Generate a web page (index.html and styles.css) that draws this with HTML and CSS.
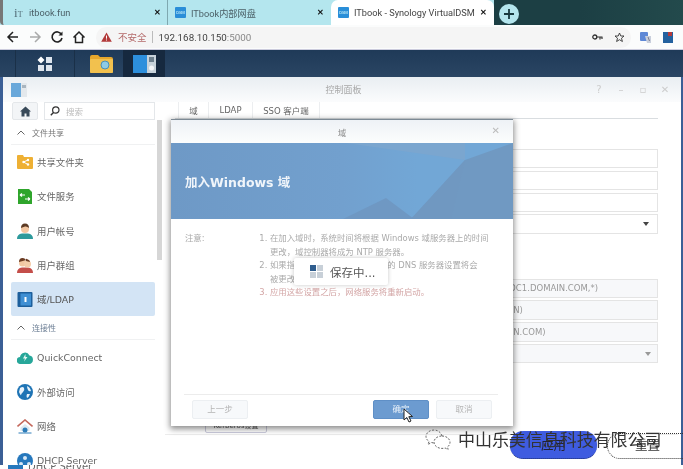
FILE: index.html
```html
<!DOCTYPE html>
<html lang="zh">
<head>
<meta charset="utf-8">
<title>ITbook - Synology VirtualDSM</title>
<link rel="stylesheet" href="styles.css">
</head>
<body>
<div class="screen">
  <div class="tabbar">
    <div class="tab tab-first">
      <span class="fav-it">i<small>T</small></span><span class="tab-title">itbook.fun</span><span class="tab-x">✕</span>
    </div>
    <div class="tab tab-second">
      <span class="fav-dsm">DSM</span><span class="tab-title">ITbook内部网盘</span><span class="tab-x">✕</span>
    </div>
    <div class="tab tab-active">
      <span class="fav-dsm">DSM</span><span class="tab-title">ITbook - Synology VirtualDSM</span><span class="tab-x">✕</span>
    </div>
    <div class="newtab">
      <svg width="12" height="12" viewBox="0 0 12 12"><path d="M6 1v10M1 6h10" stroke="#17393f" stroke-width="1.8"/></svg>
    </div>
  </div>

  <div class="addressbar">
    <div class="navs">
      <svg width="14" height="14" viewBox="0 0 14 14"><path d="M12 7H2.500M7 2 2 7l5 5" fill="none" stroke="#222" stroke-width="1.500"/></svg>
      <svg width="14" height="14" viewBox="0 0 14 14"><path d="M2 7h9.500M7 2l5 5-5 5" fill="none" stroke="#aaa" stroke-width="1.500"/></svg>
      <svg width="14" height="14" viewBox="0 0 14 14"><path d="M11.500 4.500A5 5 0 1 0 12 8" fill="none" stroke="#222" stroke-width="1.600"/><path d="M12.500 1.500v4h-4z" fill="#222"/></svg>
      <svg width="14" height="14" viewBox="0 0 14 14"><path d="M1.500 7.500 7 2l5.500 5.500M3.500 6.500V12.500h7V6.500" fill="none" stroke="#222" stroke-width="1.500"/></svg>
    </div>
    <div class="omnibox">
      <svg width="11" height="10" viewBox="0 0 11 10"><path d="M5.500.5 10.800 9.700H.2z" fill="#b23a3a"/><path d="M5.500 3.500v3.200M5.500 7.500v1" stroke="#fff" stroke-width="1"/></svg>
      <span class="insecure">不安全</span>
      <span class="sep"></span>
      <span class="url">192.168.10.150<span class="port">:5000</span></span>
      <span class="omni-right">
        <svg width="11" height="6" viewBox="0 0 11 6"><circle cx="2.800" cy="3" r="2" fill="none" stroke="#333" stroke-width="1.300"/><path d="M5 3h5.500M8 3v2.500M10 3v2" stroke="#333" stroke-width="1.200"/></svg>
        <svg width="11" height="11" viewBox="0 0 11 11"><path d="m5.500 1 1.300 3h3.200L7.500 6.200l.9 3.300-2.900-1.800-2.900 1.800.9-3.300L1 4h3.200z" fill="none" stroke="#333" stroke-width=".9"/></svg>
      </span>
    </div>
    <div class="exts">
      <svg width="11" height="11" viewBox="0 0 11 11"><rect width="8" height="9" rx="1" fill="#5e88d6"/><path d="M5 4h6v7H7z" fill="#c9cfdc"/><path d="m8 5 1.500 4" stroke="#667" stroke-width=".8"/></svg>
      <svg width="10" height="11" viewBox="0 0 10 11"><rect width="10" height="11" fill="#23619e"/><rect x="5" width="4" height="4" fill="#b53a3a"/></svg>
    </div>
  </div>

  <div class="taskbar">
    <div class="task task-main">
      <svg width="16" height="16" viewBox="0 0 16 16"><path d="M4 .5 7.500 4 4 7.500.5 4z" fill="#fff"/><rect x="9" y="1" width="6" height="6" fill="#dfe6ee"/><rect x="1" y="9" width="6" height="6" fill="#dfe6ee"/><rect x="9" y="9" width="6" height="6" fill="#dfe6ee"/></svg>
    </div>
    <div class="task task-folder">
      <svg width="23" height="18" viewBox="0 0 23 18"><path d="M0 2q0-2 2-2h6l2 2h11q2 0 2 2v12q0 2-2 2H2q-2 0-2-2z" fill="#e6a72c"/><rect y="4" width="23" height="14" rx="1" fill="#f2c14e"/><circle cx="15" cy="10" r="4" fill="#8ecbe6" stroke="#4b8fb5"/></svg>
    </div>
    <div class="task task-panel">
      <svg width="23" height="18" viewBox="0 0 23 18"><rect width="14" height="18" fill="#2d8fdc"/><rect x="14" width="9" height="18" fill="#c7d2da"/><rect x="16" y="2" width="5" height="5" fill="#6d7f8c"/><circle cx="18.500" cy="13" r="2.500" fill="#f4f6f8"/></svg>
    </div>
  </div>

  <div class="desktop">
    <div class="window">
      <div class="win-title">
        <svg class="win-logo" width="16" height="14" viewBox="0 0 16 14"><rect width="10" height="14" fill="#69a8da"/><rect x="10" width="6" height="14" fill="#e3e8ec"/><rect x="11" y="2" width="4" height="3" fill="#a9b5bf"/></svg>
        <span class="win-name">控制面板</span>
        <div class="win-controls">
          <span>?</span><span>–</span><span>▫</span><span>✕</span>
        </div>
      </div>
      <div class="win-body">
        <aside class="sidebar">
          <div class="search-row">
            <div class="home-btn">
              <svg width="11" height="11" viewBox="0 0 11 11"><path d="M5.500.5 11 5.500H9.500V10.500H6.500V7.500H4.500V10.500H1.500V5.500H0z" fill="#394a59"/></svg>
            </div>
            <div class="search-box">
              <svg width="10" height="10" viewBox="0 0 10 10"><circle cx="5.800" cy="4" r="3.200" fill="none" stroke="#333" stroke-width="1.200"/><path d="M3.500 6.500.8 9.300" stroke="#333" stroke-width="1.400"/></svg>
              <span>搜索</span>
            </div>
          </div>
          <div class="side-list">
            <div class="group-head"><svg class="chev" width="8" height="5" viewBox="0 0 8 5"><path d="m.5 4.500 3.500-3.500 3.500 3.500" fill="none" stroke="#666"/></svg>文件共享</div>
            <div class="item">
              <svg width="16" height="14" viewBox="0 0 16 14"><path d="M0 1q0-1 1-1h5l1 2h8q1 0 1 1v10q0 1-1 1H1q-1 0-1-1z" fill="#eeb034"/><path d="M11 5 6.500 7 11 9.500" fill="none" stroke="#fff"/><circle cx="11" cy="5" r="1.200" fill="#fff"/><circle cx="6.500" cy="7" r="1.200" fill="#fff"/><circle cx="11" cy="9.500" r="1.200" fill="#fff"/></svg>
              <span>共享文件夹</span>
            </div>
            <div class="item">
              <svg width="16" height="15" viewBox="0 0 16 15"><path d="M1 0h11l3 3v12H1z" fill="#2fa52c"/><path d="M3 6h5M3 6l2-1.500M3 6l2 1.500M13 10H8M13 10l-2-1.500M13 10l-2 1.500" stroke="#fff" stroke-width="1.100" fill="none"/></svg>
              <span>文件服务</span>
            </div>
            <div class="item">
              <svg width="16" height="16" viewBox="0 0 16 16"><path d="M0 16q0-5 5-5.500h6q5 .5 5 5.500z" fill="#2d9a9c"/><circle cx="8" cy="6" r="4" fill="#f2c7a2"/><path d="M4 5q0-4.500 4-4.500T12 5Q10 3 8 3.500T4 5" fill="#5c3a24"/></svg>
              <span>用户帐号</span>
            </div>
            <div class="item">
              <svg width="16" height="16" viewBox="0 0 16 16"><path d="M0 16q0-5 5-5.500h6q5 .5 5 5.500z" fill="#c44e4a"/><circle cx="5.500" cy="6" r="3.500" fill="#f2c7a2"/><circle cx="10.500" cy="7" r="3.500" fill="#f4cdaa"/><path d="M2 5q0-4 3.500-4 3 0 3.500 3l4 1q0-2-2-2.500Q8 1 9 3 6 4 2 5" fill="#6b3b22"/></svg>
              <span>用户群组</span>
            </div>
            <div class="item item-on">
              <svg width="15" height="15" viewBox="0 0 15 15"><rect width="15" height="15" rx="1" fill="#1d5f9c"/><rect x="3" y="1.500" width="10.500" height="12" fill="#3f8fd3"/><path d="M8 5v5" stroke="#fff" stroke-width="2"/></svg>
              <span>域/LDAP</span>
            </div>
            <div class="group-head head-two"><svg class="chev" width="8" height="5" viewBox="0 0 8 5"><path d="m.5 4.500 3.500-3.500 3.500 3.500" fill="none" stroke="#666"/></svg>连接性</div>
            <div class="item">
              <svg width="16" height="13" viewBox="0 0 16 13"><path d="M3.500 13a3.500 3.500 0 0 1-.5-7A5 5 0 0 1 12.500 4.500 4.300 4.300 0 0 1 12 13z" fill="#27a79a"/><path d="M8.500 3 6 7.500h2L7 10.500 10.500 6h-2z" fill="#e7f7f2"/></svg>
              <span>QuickConnect</span>
            </div>
            <div class="item">
              <svg width="16" height="16" viewBox="0 0 16 16"><circle cx="8" cy="8" r="8" fill="#1f74b5"/><path d="M3 4q3-2 4 0t-1 4-2 3-2-3zM10 2q3 1 4 5-2 1-3-1t-1-4M10 10h3q-1 3-3 4-1-2 0-4" fill="#e8f2fa"/></svg>
              <span>外部访问</span>
            </div>
            <div class="item">
              <svg width="15" height="15" viewBox="0 0 15 15"><path d="M0 7.500 7.500 1 15 7.500" fill="none" stroke="#c4685c" stroke-width="1.600"/><path d="M3 8.500 7.500 5 12 8.500V12H3z" fill="#dde8f0"/><circle cx="7.500" cy="11" r="2.500" fill="#2d7cb8"/><path d="M1 14h13" stroke="#2d7cb8"/></svg>
              <span>网络</span>
            </div>
            <div class="item">
              <svg width="16" height="16" viewBox="0 0 16 16"><circle cx="8" cy="8" r="8" fill="#2678bd"/><circle cx="8" cy="5" r="2" fill="#d8e8f5"/><circle cx="4" cy="11" r="2" fill="#d8e8f5"/><circle cx="12" cy="11" r="2" fill="#d8e8f5"/></svg>
              <span>DHCP Server</span>
            </div>
          </div>
          <div class="side-scroll"></div>
        </aside>

        <main class="content">
          <div class="content-tabs">
            <span class="ctab ctab-on">域</span>
            <span class="ctab ctab-ldap">LDAP</span>
            <span class="ctab ctab-sso">SSO 客户端</span>
          </div>
          <div class="fields">
            <div class="field"></div>
            <div class="field"></div>
            <div class="field"></div>
            <div class="field field-select"><i class="caret"></i></div>
            <div class="gap"></div>
            <div class="field field-dim">(DC1.DOMAIN.COM,*)</div>
            <div class="field field-dim field-short">(DOMAIN)</div>
            <div class="field field-dim field-short">(DOMAIN.COM)</div>
            <div class="field field-dim field-select"><i class="caret caret-dim"></i></div>
          </div>
          <div class="kerb-row"><span class="kerb">Kerberos设置</span></div>
          <div class="apply-row">
            <span class="btn-apply">应用</span>
            <span class="btn-reset">重置</span>
          </div>
        </main>
      </div>
    </div>

    <section class="dialog">
      <div class="dlg-title"><span>域</span><span class="dlg-x">✕</span></div>
      <div class="banner">
        <svg class="banner-art" width="342" height="76" viewBox="0 0 342 76" preserveAspectRatio="none">
          <defs>
            <linearGradient id="bannerBase" x1="0" y1="0" x2="1" y2="0">
              <stop offset="0" stop-color="#6e99c6"/>
              <stop offset=".5" stop-color="#72a0ce"/>
              <stop offset=".72" stop-color="#72a7d6"/>
              <stop offset="1" stop-color="#72a7d6"/>
            </linearGradient>
          </defs>
          <rect width="342" height="76" fill="url(#bannerBase)"/>
          <path d="M175 0H294V17z" fill="#7ba6cf"/>
          <path d="M294 17 342 0V76H240z" fill="#7099c2"/>
          <path d="M294 17 240 76H280z" fill="#7098c1"/>
          <path d="M215 55 172 76H243z" fill="#6f98c3"/>
        </svg>
        <h1>加入Windows 域</h1>
      </div>
      <div class="dlg-body">
        <div class="note-label">注意:</div>
        <ol class="note-list">
          <li>在加入域时，系统时间将根据 Windows 域服务器上的时间更改，域控制器将成为 NTP 服务器。</li>
          <li>如果指定的域控制器不同于系统的 DNS 服务器设置将会<br>被更改。</li>
          <li class="warn">应用这些设置之后，网络服务将重新启动。</li>
        </ol>
      </div>
      <div class="dlg-foot">
        <span class="dbtn">上一步</span>
        <span class="foot-space"></span>
        <span class="dbtn dbtn-ok">确定</span>
        <span class="dbtn">取消</span>
      </div>
    </section>

    <div class="saving">
      <span class="saving-icon"><i class="on"></i><i></i><i></i><i></i></span>
      <span>保存中...</span>
    </div>

    <svg class="cursor" width="11" height="15" viewBox="0 0 11 15"><path d="M1 1v11l2.800-2.500L6 14l2-1-2.200-4.300L9.500 8.500z" fill="#fff" stroke="#222"/></svg>

    <div class="watermark">
      <svg width="26" height="22" viewBox="0 0 26 22"><path d="M9 1C4.500 1 1 4 1 7.500c0 2 1 3.500 3 5l-1 3 3.500-2c1 .3 2 .5 3 .5M17 7c-1-3.500-4-6-8-6" fill="none" stroke="#666" stroke-dasharray="2 1.500"/><path d="M17 7c4.500 0 8 2.800 8 6.300 0 2-1 3.500-2.500 4.700l.6 2.500-3-1.500c-1 .3-2 .4-3.100.4-4.500 0-8-2.800-8-6.300S12.500 7 17 7z" fill="#fff" stroke="#666" stroke-dasharray="2 1.500"/></svg>
      <span>中山乐美信息科技有限公司</span>
    </div>

    <div class="glitch-row">
      <svg width="15" height="4" viewBox="0 0 15 4"><rect width="15" height="4" fill="#2678bd"/></svg>
      <span>DHCP Server</span>
    </div>
  </div>
</div>
</body>
</html>
```

FILE: styles.css
```css
* { box-sizing: border-box; }
html, body { margin: 0; padding: 0; background: #fff; }
body { width: 683px; height: 469px; overflow: hidden; }

.screen {
  width: 683px;
  height: 469px;
  display: flex;
  flex-direction: column;
  font-family: "DejaVu Sans", "Noto Sans CJK SC", sans-serif;
  font-size: 9.400px;
  color: #555;
  filter: blur(0.35px);
  overflow: hidden;
}

/* browser tabs */
.tabbar {
  height: 25px;
  display: flex;
  background: linear-gradient(90deg, #b4e6ee 0 494px, #1c3f44 494px 580px, #234a4c);
  font-family: Roboto, "Noto Sans CJK SC", sans-serif;
  font-size: 9.200px;
  color: #333;
}
.tab { display: flex; align-items: center; height: 25px; }
.tab-first {
  width: 168px;
  padding-left: 11px;
  border-left: 3px solid #777;
  border-radius: 0 0 0 4px;
  background: linear-gradient(90deg, #b4e6ee 0 164px, #7fa8b0 164px 165px);
}
.tab-second { width: 163px; padding-left: 7px; }
.tab-active { width: 163px; padding-left: 7px; background: #fff; border-radius: 7px 7px 0 0; }
.tab-title { flex: 1; padding-left: 5px; white-space: nowrap; overflow: hidden; color: #4b5f66; }
.tab-active .tab-title { color: #444; padding-left: 5px; }
.tab-x { width: 14px; flex: none; font-size: 7.500px; color: #111; font-weight: 700; }
.fav-it { width: 10px; flex: none; font-family: "Liberation Serif", serif; font-size: 13px; color: #54707a; }
.fav-it small { font-size: 8px; }
.fav-dsm {
  width: 11px;
  height: 11px;
  flex: none;
  background: #2a8ed8;
  color: #dff;
  font-size: 4px;
  line-height: 11px;
  text-align: center;
  border-radius: 1px;
}
.newtab {
  width: 20px;
  height: 20px;
  margin: 4px 0 0 5px;
  border-radius: 50%;
  background: #b4e6ee;
  display: flex;
  align-items: center;
  justify-content: center;
}

/* address bar */
.addressbar {
  height: 25px;
  background: #fbfcfc;
  display: flex;
  align-items: center;
  border-bottom: 1px solid #ccd;
}
.navs { width: 96px; flex: none; padding-left: 6px; display: flex; gap: 8px; }
.omnibox {
  width: 535px;
  height: 21px;
  flex: none;
  background: #f5f5f5;
  border-radius: 10px;
  display: flex;
  align-items: center;
  padding: 0 6px 0 5px;
  font-family: Roboto, "Noto Sans CJK SC", sans-serif;
  font-size: 9.800px;
}
.insecure { color: #b46a6a; margin-left: 6px; font-size: 9.500px; }
.sep { width: 1px; height: 12px; background: #bbb; margin: 0 6px 0 5px; }
.url { color: #444; font-size: 9.800px; }
.port { color: #888; }
.omni-right { margin-left: auto; display: flex; align-items: center; gap: 11px; }
.exts { display: flex; align-items: center; gap: 12px; margin-left: 9px; }

/* DSM task bar */
.taskbar {
  height: 27px;
  background: linear-gradient(#1f3a58, #2a4563);
  display: flex;
  padding-left: 15px;
}
.task {
  display: flex;
  align-items: center;
  justify-content: center;
  height: 27px;
}
.task-main { width: 60px; border-right: 1px solid #1a3048; border-left: 1px solid #1a3048; }
.task-folder { width: 48px; padding-left: 4px; }
.task-panel { width: 42px; background: #16293f; }

/* desktop */
.desktop {
  position: relative;
  flex: 1;
  background: #3b5f96;
  overflow: hidden;
}
.window {
  position: absolute;
  left: 3px;
  top: 0;
  width: 678px;
  height: 392px;
  background: #fff;
  display: flex;
  flex-direction: column;
}
.win-title {
  height: 25px;
  flex: none;
  display: grid;
  grid-template-columns: 1fr auto 1fr;
  align-items: center;
  background: linear-gradient(#e9eef2, #fbfcfd);
  padding: 0 5px 0 8px;
}
.win-name { color: #a8a8a8; font-size: 9px; }
.win-logo { flex: none; }
.win-controls {
  display: flex;
  justify-self: end;
  color: #ccc;
  font-size: 10px;
}
.win-controls span { width: 22px; text-align: center; }
.win-body { flex: 1; display: flex; min-height: 0; }

/* sidebar */
.sidebar { width: 162px; flex: none; position: relative; overflow: hidden; }
.search-row { display: flex; gap: 6px; padding: 0 0 0 9px; height: 18px; }
.home-btn {
  width: 26px;
  height: 18px;
  border: 1px solid #e4e7ea;
  border-radius: 2px;
  background: #f3f5f7;
  display: flex;
  align-items: center;
  justify-content: center;
}
.search-box {
  width: 111px;
  height: 18px;
  border: 1px solid #e4e7ea;
  display: flex;
  align-items: center;
  gap: 6px;
  padding-left: 5px;
  color: #bbb;
  font-size: 8.500px;
}
.side-list { padding: 0 0 0 8px; width: 152px; }
.group-head {
  height: 25px;
  display: flex;
  align-items: center;
  font-size: 8px;
  color: #777;
  border-bottom: 1px solid #f0f1f2;
  padding-left: 6px;
}
.head-two { margin-top: -1px; color: #6d7f95; }
.chev { margin-right: 7px; }
.item {
  height: 34.300px;
  display: flex;
  align-items: center;
  padding-left: 6px;
  gap: 4px;
  color: #666;
  white-space: nowrap;
}
.item svg { width: 16px; flex: none; }
.item-on { background: #d3e4f5; border-radius: 2px; color: #555; }
.side-scroll {
  position: absolute;
  left: 154px;
  top: 18px;
  width: 5px;
  height: 140px;
  background: #d6d6d6;
}

/* content behind dialog */
.content { flex: 1; min-width: 0; padding: 0 23px 0 10px; }
.content-tabs {
  height: 17px;
  display: flex;
  padding-left: 3px;
  font-size: 8.500px;
  color: #666;
  border-bottom: 1px solid #d9dde0;
}
.ctab { display: flex; align-items: center; justify-content: center; border-right: 1px solid #eceef0; flex: none; }
.ctab-on { width: 31px; border-left: 1px solid #eceef0; }
.ctab-ldap { width: 44px; }
.ctab-sso { width: 67px; }
.fields {
  padding: 30px 0 0 172px;
  display: flex;
  flex-direction: column;
  gap: 2.500px;
}
.field {
  height: 19.300px;
  flex: none;
  border: 1px solid #e4e4e4;
  background: #fff;
  display: flex;
  align-items: center;
  justify-content: flex-end;
  padding-right: 8px;
  font-size: 8.500px;
  color: #999;
  position: relative;
}
.field-dim { background: #f7f8fa; justify-content: flex-start; padding-left: 158px; white-space: nowrap; }
.field-short { padding-left: 133px; }
.gap { height: 40px; flex: none; }
.caret {
  width: 0;
  height: 0;
  border-left: 3.500px solid transparent;
  border-right: 3.500px solid transparent;
  border-top: 4px solid #444;
}
.caret-dim { border-top-color: #999; position: absolute; right: 6px; top: 7px; }
.kerb-row { padding: 57px 0 0 27px; height: 72px; border-bottom: 1px solid #ececec; margin-right: -20px; margin-left: -10px; }
.kerb {
  display: block;
  width: 62px;
  height: 13px;
  margin-left: 13px;
  border: 1px solid #ccd;
  border-radius: 2px;
  font-size: 7px;
  line-height: 11px;
  text-align: center;
  white-space: nowrap;
  overflow: hidden;
  color: #555;
}
.apply-row { display: flex; gap: 10px; padding-left: 335px; margin-top: -4px; }
.btn-apply {
  width: 87px;
  height: 28px;
  background: #3f5ce0;
  border-bottom: 1px dotted #1b2a66;
  border-radius: 13px;
  color: #223;
  font-size: 12.500px;
  line-height: 29px;
  text-align: center;
  flex: none;
}
.btn-reset {
  width: 90px;
  height: 26px;
  margin-top: 2px;
  border: 1px dotted #333;
  border-radius: 13px;
  color: #333;
  font-size: 12.500px;
  line-height: 24px;
  padding-left: 27px;
  flex: none;
}

/* dialog */
.dialog {
  position: absolute;
  left: 171px;
  top: 42px;
  width: 342px;
  height: 307px;
  background: #fff;
  border-top: 1px solid #7d8a95;
  box-shadow: 0 2px 6px 1px rgba(0, 0, 0, .45);
  display: flex;
  flex-direction: column;
}
.dlg-title {
  height: 23px;
  flex: none;
  background: linear-gradient(#eef2f6, #fcfdfd);
  display: flex;
  align-items: center;
  justify-content: center;
  position: relative;
  font-size: 8.500px;
  color: #8a8a8a;
}
.dlg-x { position: absolute; right: 13px; top: 5px; color: #bbb; font-size: 10px; }
.banner { height: 76px; flex: none; position: relative; overflow: hidden; display: flex; align-items: center; padding-left: 14px; }
.banner-art { position: absolute; left: 0; top: 0; }
.banner h1 {
  position: relative;
  margin: 0;
  font-size: 12.500px;
  font-weight: 700;
  color: #f0f5fa;
}
.dlg-body { flex: 1; display: flex; padding-top: 13px; font-size: 8.400px; color: #aaa; line-height: 13.500px; }
.note-label { width: 89px; padding-left: 14px; flex: none; }
.note-list { margin: 0; padding: 0 0 0 10px; width: 231px; list-style: decimal; }
.warn { color: #d3a5a5; }
.dlg-foot {
  height: 32px;
  flex: none;
  margin: 0 15px 0 13px;
  padding: 5px 6px 0 8px;
  border-top: 1px solid #ececec;
  display: flex;
  gap: 7px;
  font-size: 8.500px;
}
.foot-space { flex: 1; }
.dbtn {
  width: 56px;
  height: 19px;
  background: #f7f9fb;
  border: 1px solid #eceff2;
  border-radius: 2px;
  text-align: center;
  line-height: 17px;
  color: #b5b5b5;
}
.dbtn-ok { background: #6c9bd0; border-color: #5f8fc6; color: #eaf2fa; }

/* overlays */
.saving {
  position: absolute;
  left: 294px;
  top: 181px;
  width: 94px;
  height: 27px;
  background: #fff;
  box-shadow: 0 0 4px rgba(0, 0, 0, .22);
  border-radius: 2px;
  display: flex;
  align-items: center;
  gap: 7px;
  padding-left: 16px;
  font-size: 11.500px;
  color: #555;
  white-space: nowrap;
}
.saving-icon { display: grid; grid-template-columns: 6px 6px; gap: 1px; }
.saving-icon i { width: 6px; height: 6px; background: #c8d0d8; }
.saving-icon .on { background: #2f5d8e; }
.cursor { position: absolute; left: 403px; top: 331px; }
.watermark {
  position: absolute;
  left: 425px;
  top: 352px;
  display: flex;
  align-items: center;
  gap: 7px;
  color: #333;
  font-size: 17px;
  line-height: 22px;
  white-space: nowrap;
  letter-spacing: -.05px;
}
.glitch-row {
  position: absolute;
  left: 0;
  top: 388px;
  width: 683px;
  height: 4px;
  background: #fff;
  overflow: hidden;
  display: flex;
  gap: 5px;
  padding-left: 8px;
  font-size: 10px;
  line-height: 4px;
  color: #666;
}
```
